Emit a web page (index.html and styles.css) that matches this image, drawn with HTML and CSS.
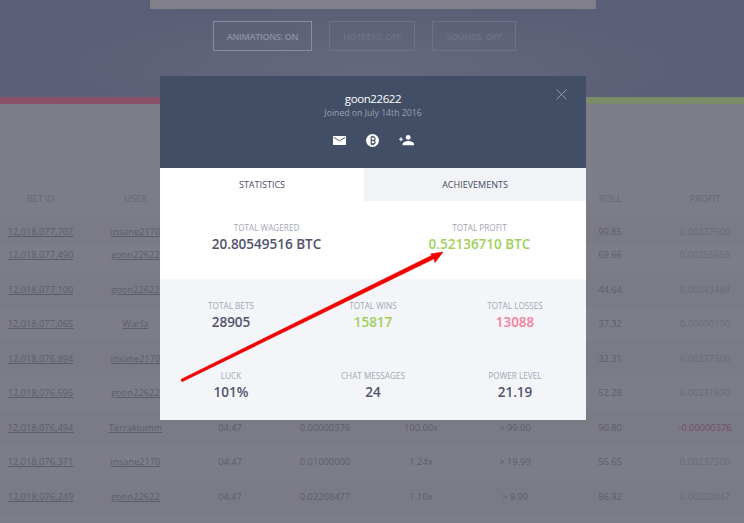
FILE: index.html
```html
<!DOCTYPE html>
<html lang="en">
<head>
    <meta charset="UTF-8">
    <meta name="viewport" content="width=device-width, initial-scale=1.0">
    <title>Bets - User Stats</title>
    <link rel="stylesheet" href="styles.css">
</head>
<body>
    <div class="page">
        <section class="top">
            <div class="top-bar"></div>
            <div class="toggles">
                <span class="toggle toggle-on">ANIMATIONS: ON</span>
                <span class="toggle">HOTKEYS: OFF</span>
                <span class="toggle">SOUNDS: OFF</span>
            </div>
        </section>
        <div class="band"><div class="band-red"></div><div class="band-green"></div></div>

        <section class="bets">
            <div class="row row-head">
                <span>BET ID</span><span>USER</span><span></span><span></span><span></span><span></span><span>ROLL</span><span>PROFIT</span>
            </div>
            <div class="row row-first">
                <a href="#">12,018,077,707</a><a href="#">insane2170</a><span></span><span></span><span></span><span></span><span>99.85</span><span class="win">0.00237500</span>
            </div>
            <div class="row row-second stripe">
                <a href="#">12,018,077,490</a><a href="#">goon22622</a><span></span><span></span><span></span><span></span><span>69.66</span><span class="win">0.00255658</span>
            </div>
            <div class="row">
                <a href="#">12,018,077,100</a><a href="#">goon22622</a><span></span><span></span><span></span><span></span><span>44.64</span><span class="win">0.00243484</span>
            </div>
            <div class="row stripe">
                <a href="#">12,018,077,065</a><a href="#">Warfa</a><span></span><span></span><span></span><span></span><span>37.32</span><span class="win">0.00000100</span>
            </div>
            <div class="row">
                <a href="#">12,018,076,894</a><a href="#">insane2170</a><span></span><span></span><span></span><span></span><span>32.31</span><span class="win">0.00237500</span>
            </div>
            <div class="row stripe">
                <a href="#">12,018,076,695</a><a href="#">goon22622</a><span></span><span></span><span></span><span></span><span>52.28</span><span class="win">0.00231890</span>
            </div>
            <div class="row">
                <a href="#">12,018,076,494</a><a href="#">Terrakiumm</a><span>04:47</span><span>0.00000376</span><span>100.00x</span><span>&gt; 99.00</span><span>90.80</span><span class="loss">-0.00000376</span>
            </div>
            <div class="row stripe">
                <a href="#">12,018,076,371</a><a href="#">insane2170</a><span>04:47</span><span>0.01000000</span><span>1.24x</span><span>&gt; 19.99</span><span>56.65</span><span class="win">0.00237500</span>
            </div>
            <div class="row">
                <a href="#">12,018,076,249</a><a href="#">goon22622</a><span>04:47</span><span>0.02208477</span><span>1.10x</span><span>&gt; 9.99</span><span>86.92</span><span class="win">0.00220847</span>
            </div>
        </section>

        <div class="modal">
            <header class="modal-header">
                <svg class="modal-close" width="11" height="11" viewBox="0 0 11 11"><path d="M0.5 0.5L10.5 10.5M10.5 0.5L0.5 10.5" stroke="#8f99aa" stroke-width="1" fill="none"/></svg>
                <div class="modal-name">goon22622</div>
                <div class="modal-joined">Joined on July 14th 2016</div>
                <div class="modal-icons">
                    <svg width="13" height="9.3" viewBox="0 0 14 10"><path d="M0.5 0H13.5A0.5 0.5 0 0 1 14 0.5V9.5A0.5 0.5 0 0 1 13.5 10H0.5A0.5 0.5 0 0 1 0 9.5V0.5A0.5 0.5 0 0 1 0.5 0Z" fill="#fff"/><path d="M1 1.5L7 5.2L13 1.5" stroke="#414e66" stroke-width="1" fill="none"/></svg>
                    <svg width="13" height="13" viewBox="0 0 14 14"><circle cx="7" cy="7" r="7" fill="#fff"/><path d="M5 3.3H8A1.7 1.7 0 0 1 8 6.9H5M8 6.9A1.8 1.8 0 0 1 8 10.6H5M5.6 3.3V10.6M6.4 1.9V3.3M8 1.9V3.3M6.4 10.6V12.1M8 10.6V12.1" stroke="#414e66" stroke-width="1.2" fill="none"/></svg>
                    <svg width="15" height="10.3" viewBox="0 0 16 11"><circle cx="9.8" cy="2.6" r="2.6" fill="#fff"/><path d="M3.8 11V9.6C3.8 7.6 7.6 6.4 9.8 6.4S16 7.6 16 9.6V11Z" fill="#fff"/><path d="M0 4.6H4.2M2.1 2.5V6.7" stroke="#fff" stroke-width="1.2" fill="none"/></svg>
                </div>
            </header>
            <div class="modal-tabs">
                <div class="modal-tab modal-tab-active">STATISTICS</div>
                <div class="modal-tab">ACHIEVEMENTS</div>
            </div>
            <div class="stats-main">
                <div class="stat"><div class="stat-label">TOTAL WAGERED</div><div class="stat-value">20.80549516 BTC</div></div>
                <div class="stat"><div class="stat-label">TOTAL PROFIT</div><div class="stat-value green">0.52136710 BTC</div></div>
            </div>
            <div class="stats-grid">
                <div class="stat"><div class="stat-label">TOTAL BETS</div><div class="stat-value">28905</div></div>
                <div class="stat"><div class="stat-label">TOTAL WINS</div><div class="stat-value green">15817</div></div>
                <div class="stat"><div class="stat-label">TOTAL LOSSES</div><div class="stat-value pink">13088</div></div>
                <div class="stat"><div class="stat-label">LUCK</div><div class="stat-value">101%</div></div>
                <div class="stat"><div class="stat-label">CHAT MESSAGES</div><div class="stat-value">24</div></div>
                <div class="stat"><div class="stat-label">POWER LEVEL</div><div class="stat-value">21.19</div></div>
            </div>
        </div>

        <!-- red annotation drawn on top of the screenshot -->
        <svg class="arrow" width="744" height="523" viewBox="0 0 744 523">
            <path d="M180.9 379.4L432.1 255.2L430.5 254L443 252L435 262.5L433.9 258.8L182.1 381.7Z" fill="#f00000" stroke="#f00000" stroke-width="0.6" stroke-linejoin="round"/>
        </svg>
    </div>
</body>
</html>
```

FILE: styles.css
```css
* {
    box-sizing: border-box;
}
html, body {
    margin: 0;
    padding: 0;
}
body {
    font-family: 'Open Sans', sans-serif;
    background-color: #7d7d88;
}
.page {
    position: relative;
    width: 744px;
    height: 523px;
    overflow: hidden;
}
.top {
    height: 97px;
    background: radial-gradient(ellipse at 50% 70%, #65687d 0%, #5a5e76 70%);
}
.top-bar {
    width: 446px;
    height: 9px;
    margin-left: 150px;
    background-color: #807f8a;
}
.toggles {
    display: flex;
    gap: 17px;
    margin: 12px 0 0 213px;
}
.toggle {
    width: 84px;
    height: 30px;
    display: flex;
    align-items: center;
    justify-content: center;
    border: 1px solid #6e7387;
    color: #6e7285;
    font-size: 9px;
    font-weight: 600;
    letter-spacing: -0.3px;
    white-space: nowrap;
}
.toggle-on {
    width: 99px;
    border-color: #8a8e9f;
    color: #8d90a0;
}
.toggle:nth-child(2) {
    width: 86px;
}
.band {
    display: flex;
    height: 7px;
}
.band-red {
    width: 50%;
    background-color: #8b5069;
}
.band-green {
    width: 50%;
    background-color: #7b8a69;
}
.bets {
    font-size: 9.3px;
    color: #5c5d6c;
}
.row {
    display: grid;
    grid-template-columns: 81px 109px 80px 110px 82px 106px 84px 106px;
    align-items: center;
    justify-items: center;
    height: 34.5px;
    background-color: #7b7b86;
}
.row a {
    color: #5c5d6c;
}
.stripe {
    background-color: #7d7d88;
}
.row-head {
    height: 111px;
    padding-top: 88px;
    align-items: start;
    background-color: #7d7d88;
    color: #65667a;
}
.row-first {
    height: 28px;
    padding-top: 5px;
}
.row-second {
    height: 29px;
    padding-bottom: 6px;
}
.win {
    color: #676d72;
}
.loss {
    color: #724e66;
}
.modal {
    position: absolute;
    left: 160px;
    top: 76px;
    width: 426px;
    height: 344px;
    display: flex;
    flex-direction: column;
    background-color: #fff;
}
.modal-header {
    position: relative;
    flex: none;
    height: 92px;
    padding-top: 15px;
    background-color: #414e66;
    text-align: center;
}
.modal-close {
    position: absolute;
    top: 13px;
    right: 19px;
}
.modal-name {
    color: #fff;
    font-size: 11.5px;
    letter-spacing: -0.4px;
    line-height: 16px;
}
.modal-joined {
    color: #99a1b0;
    font-size: 8.7px;
    line-height: 13px;
}
.modal-icons {
    display: flex;
    justify-content: center;
    align-items: center;
    gap: 20px;
    margin-top: 14px;
}
.modal-tabs {
    flex: none;
    display: flex;
    height: 33px;
}
.modal-tab {
    display: flex;
    align-items: center;
    justify-content: center;
    font-size: 9px;
    color: #474a5e;
    background-color: #f1f3f6;
}
.modal-tab-active {
    flex: 0 0 204px;
    background-color: #fff;
}
.modal-tab:last-child {
    flex: 0 0 222px;
}
.stats-main {
    flex: none;
    display: grid;
    grid-template-columns: 1fr 1fr;
    height: 78px;
    padding-top: 21px;
}
.stats-grid {
    flex: 1;
    display: grid;
    grid-template-columns: repeat(3, 1fr);
    grid-template-rows: 70px 50px;
    padding-top: 21px;
    background-color: #f3f5f9;
}
.stat {
    text-align: center;
}
.stat-label {
    color: #a3a6b2;
    font-size: 8.2px;
    line-height: 12px;
}
.stat-value {
    color: #505369;
    font-size: 13.5px;
    font-weight: 600;
    line-height: 20px;
}
.green {
    color: #9fd05a;
}
.pink {
    color: #f5809a;
}
.arrow {
    position: absolute;
    left: 0;
    top: 0;
}
```
